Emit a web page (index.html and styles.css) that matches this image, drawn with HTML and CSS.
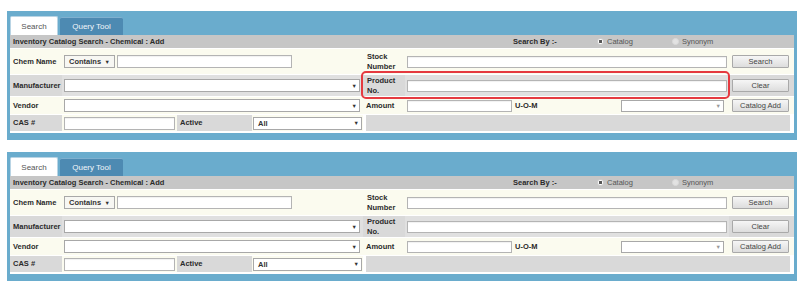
FILE: index.html
```html
<!DOCTYPE html>
<html>
<head>
<meta charset="utf-8">
<link rel="stylesheet" href="styles.css">
</head>
<body>
<div class="page">
  <div class="panel">
    <div class="tabs">
      <div class="tab tab-active">Search</div>
      <div class="tab tab-off">Query Tool</div>
    </div>
    <div class="content">
      <div class="head">
        <div class="h-title">Inventory Catalog Search - Chemical : Add</div>
        <div class="h-by">Search By :-</div>
        <div class="h-opt"><span class="radio on"></span>Catalog</div>
        <div class="h-opt"><span class="radio off"></span>Synonym</div>
      </div>
      <div class="grid">
        <div class="cell cream lbl">Chem Name</div>
        <div class="cell cream"><div class="sel sel-contains"><b>Contains</b><span class="arr">▼</span></div><div class="inp inp-chem"></div></div>
        <div class="cell cream lbl two">Stock Number</div>
        <div class="cell cream"><div class="inp inp-wide"></div></div>
        <div class="cell cream"><div class="btn">Search</div></div>

        <div class="cell grey lbl">Manufacturer</div>
        <div class="cell greyd"><div class="sel sel-wide"><span></span><span class="arr">▼</span></div></div>
        <div class="cell grey lbl two">Product No.</div>
        <div class="cell greyd"><div class="inp inp-wide"></div></div>
        <div class="cell grey"><div class="btn">Clear</div></div>

        <div class="cell cream lbl">Vendor</div>
        <div class="cell cream"><div class="sel sel-wide"><span></span><span class="arr">▼</span></div></div>
        <div class="cell cream lbl">Amount</div>
        <div class="cell cream"><div class="inp inp-amt"></div><div class="lbl uom">U-O-M</div><div class="sel sel-uom"><span></span><span class="arr light">▼</span></div></div>
        <div class="cell cream"><div class="btn">Catalog Add</div></div>

        <div class="cell grey lbl">CAS #</div>
        <div class="cell split">
          <div class="sub cream"><div class="inp inp-cas"></div></div>
          <div class="sub grey lbl act">Active</div>
          <div class="sub cream"><div class="sel sel-all"><b>All</b><span class="arr">▼</span></div></div>
        </div>
        <div class="cell grey span3"></div>
      </div>
    </div>
    <div class="highlight"></div>
  </div>

  <div class="panel second">
    <div class="tabs">
      <div class="tab tab-active">Search</div>
      <div class="tab tab-off">Query Tool</div>
    </div>
    <div class="content">
      <div class="head">
        <div class="h-title">Inventory Catalog Search - Chemical : Add</div>
        <div class="h-by">Search By :-</div>
        <div class="h-opt"><span class="radio on"></span>Catalog</div>
        <div class="h-opt"><span class="radio off"></span>Synonym</div>
      </div>
      <div class="grid">
        <div class="cell cream lbl">Chem Name</div>
        <div class="cell cream"><div class="sel sel-contains"><b>Contains</b><span class="arr">▼</span></div><div class="inp inp-chem"></div></div>
        <div class="cell cream lbl two">Stock Number</div>
        <div class="cell cream"><div class="inp inp-wide"></div></div>
        <div class="cell cream"><div class="btn">Search</div></div>

        <div class="cell grey lbl">Manufacturer</div>
        <div class="cell greyd"><div class="sel sel-wide"><span></span><span class="arr">▼</span></div></div>
        <div class="cell grey lbl two">Product No.</div>
        <div class="cell greyd"><div class="inp inp-wide"></div></div>
        <div class="cell grey"><div class="btn">Clear</div></div>

        <div class="cell cream lbl">Vendor</div>
        <div class="cell cream"><div class="sel sel-wide"><span></span><span class="arr">▼</span></div></div>
        <div class="cell cream lbl">Amount</div>
        <div class="cell cream"><div class="inp inp-amt"></div><div class="lbl uom">U-O-M</div><div class="sel sel-uom"><span></span><span class="arr light">▼</span></div></div>
        <div class="cell cream"><div class="btn">Catalog Add</div></div>

        <div class="cell grey lbl">CAS #</div>
        <div class="cell split">
          <div class="sub cream"><div class="inp inp-cas"></div></div>
          <div class="sub grey lbl act">Active</div>
          <div class="sub cream"><div class="sel sel-all"><b>All</b><span class="arr">▼</span></div></div>
        </div>
        <div class="cell grey span3"></div>
      </div>
    </div>
  </div>
</div>
</body>
</html>
```
FILE: styles.css
```css
html, body {
  margin: 0;
  padding: 0;
  background: #ffffff;
}
body {
  font-family: "Liberation Sans", Arial, sans-serif;
  color: #222;
}
.page {
  padding: 11px 0 0 7px;
}
.panel {
  position: relative;
  width: 784px;
  background: #6aaccd;
  padding: 5px 3px 7px 3px;
}
.panel.second {
  margin-top: 12px;
}
.tabs {
  display: flex;
  align-items: flex-end;
  gap: 2px;
  height: 19px;
}
.tab {
  font-size: 8px;
  display: flex;
  align-items: center;
  justify-content: center;
  box-sizing: border-box;
}
.tab-active {
  width: 48px;
  height: 19px;
  background: #ffffff;
  color: #555;
  border: 1px solid #b9d4e4;
  border-bottom: none;
  border-radius: 2px 2px 0 0;
}
.tab-off {
  width: 63px;
  height: 18px;
  background: #4d8ab2;
  color: #f2f6fa;
  border-top: 1px solid #7fb0cf;
  border-radius: 2px 2px 0 0;
}
.content {
  background: #ffffff;
  padding-bottom: 2px;
}
.head {
  display: flex;
  align-items: center;
  height: 13px;
  background: #c6c6c6;
  font-size: 7.5px;
}
.h-title {
  width: 500px;
  padding-left: 3px;
  box-sizing: border-box;
  font-weight: bold;
  color: #2a2a2a;
}
.h-by {
  width: 85px;
  padding-left: 3px;
  box-sizing: border-box;
  font-weight: bold;
  color: #2a2a2a;
}
.h-opt {
  width: 75px;
  padding-left: 2px;
  box-sizing: border-box;
  display: flex;
  align-items: center;
  color: #555;
}
.radio {
  width: 7px;
  height: 7px;
  border-radius: 50%;
  margin-right: 3px;
  box-sizing: border-box;
}
.radio.on {
  background: radial-gradient(circle, #555 0 1.4px, #fff 1.8px);
  border: 1px solid #d0d0d0;
}
.radio.off {
  background: #e2e2e2;
  border: 1px solid #dadada;
}
.grid {
  display: grid;
  grid-template-columns: 52px 301px 42px 324px 65px;
  grid-template-rows: 25px 21px 17px 16px;
  row-gap: 1px;
  padding-top: 1px;
}
.cell {
  display: flex;
  align-items: center;
  box-sizing: border-box;
}
.cream { background: #fbfbef; }
.grey { background: #d9d9d9; }
.greyd { background: #e0e0e0; }
.lbl {
  font-size: 7.5px;
  font-weight: bold;
  color: #2a2a2a;
  padding-left: 3px;
  line-height: 9.5px;
}
.two {
  padding-left: 4px;
  padding-right: 6px;
}
.split {
  display: flex;
  align-items: stretch;
}
.sub {
  display: flex;
  align-items: center;
  box-sizing: border-box;
}
.split .sub:first-child { width: 115px; }
.act { width: 75px; }
.split .sub:last-child { flex: 1; }
.span3 {
  grid-column: span 3;
  margin: 0 4px 0 3px;
}
.inp {
  height: 13px;
  background: #ffffff;
  border: 1px solid #b4b4b4;
  box-sizing: border-box;
  box-shadow: inset 0 1px 1px rgba(0,0,0,0.06);
}
.sel {
  height: 13px;
  background: #ffffff;
  border: 1px solid #a8a8a8;
  box-sizing: border-box;
  display: flex;
  align-items: center;
  justify-content: space-between;
  padding: 0 2px 0 4px;
  font-size: 7.5px;
  color: #333;
}
.arr {
  font-size: 5.5px;
  color: #333;
}
.arr.light { color: #999; }
.sel-contains {
  width: 51px;
  margin-left: 2px;
  background: #f7f7f3;
  padding-right: 4px;
}
.inp-chem {
  width: 175px;
  margin-left: 2px;
}
.sel-wide {
  width: 296px;
  margin-left: 2px;
  height: 13px;
}
.inp-wide {
  width: 320px;
  margin-left: 2px;
  height: 12px;
}
.inp-amt {
  width: 105px;
  margin-left: 2px;
  height: 12px;
}
.uom {
  width: 109px;
  padding-left: 3px;
  box-sizing: border-box;
}
.sel-uom {
  width: 103px;
  height: 12px;
}
.inp-cas {
  width: 111px;
  margin-left: 2px;
}
.sel-all {
  width: 109px;
  margin-left: 1px;
}
.btn {
  width: 57px;
  height: 13px;
  margin-left: 3px;
  box-sizing: border-box;
  border: 1px solid #a9a9a9;
  border-radius: 1px;
  background: linear-gradient(#f6f6f6, #dddddd);
  font-size: 7.5px;
  color: #444;
  display: flex;
  align-items: center;
  justify-content: center;
}
.highlight {
  position: absolute;
  left: 354px;
  top: 60px;
  width: 369px;
  height: 28px;
  border: 2px solid #e53a40;
  border-radius: 5px;
  box-sizing: border-box;
}
```
